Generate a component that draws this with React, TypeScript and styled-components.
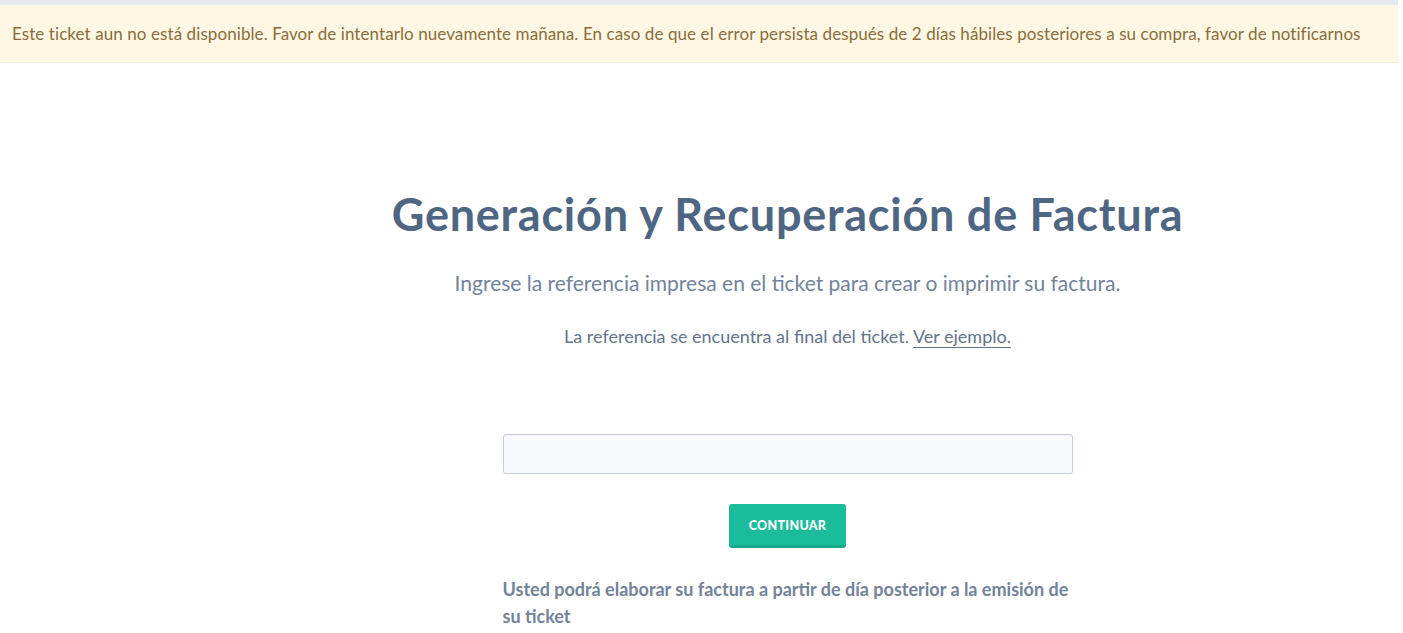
import React from 'react';
import styled, { createGlobalStyle } from 'styled-components';

const GlobalStyle = createGlobalStyle`
  html, body {
    margin: 0;
    padding: 0;
    background: #fff;
    font-family: Lato, "Open Sans", sans-serif;
  }
`;

const Page = styled.div`
  width: 1398px;
  border-top: 5px solid #e4e9f0;
`;

const Alert = styled.div`
  background: #fdf7e3;
  border-bottom: 1px solid #f6ecd0;
  color: #8a6d3b;
  font-size: 17px;
  letter-spacing: 0.08px;
  padding: 0 12px;
  height: 57px;
  display: flex;
  align-items: center;
  white-space: nowrap;
`;

const Main = styled.main`
  display: flex;
  flex-direction: column;
  align-items: center;
  padding-left: 177px;
  padding-top: 123px;
`;

const Title = styled.h1`
  margin: 0;
  font-size: 45px;
  font-weight: 700;
  color: #4f6683;
  letter-spacing: 0.75px;
  line-height: 56px;
`;

const Lead = styled.p`
  margin: 28px 0 0;
  font-size: 21px;
  color: #72839a;
  line-height: 26px;
`;

const Hint = styled.p`
  margin: 29px 0 0;
  font-size: 18px;
  color: #63748c;
  line-height: 22px;

  a {
    color: inherit;
    text-decoration: none;
    border-bottom: 1px solid #63748c;
  }
`;

const Form = styled.form`
  width: 570px;
  margin-top: 87px;
  display: flex;
  flex-direction: column;
  align-items: center;
`;

const Input = styled.input`
  box-sizing: border-box;
  width: 100%;
  height: 40px;
  background: #f8f9fc;
  border: 1px solid #c3cbd8;
  border-radius: 3px;
  outline: none;
`;

const Button = styled.button`
  margin-top: 30px;
  width: 117px;
  height: 44px;
  background: #1abc9c;
  border: none;
  border-bottom: 3px solid #17a98c;
  border-radius: 3px;
  color: #fff;
  font-family: Lato, sans-serif;
  font-weight: 900;
  font-size: 12.5px;
  letter-spacing: 0.3px;
  padding-top: 3px;
`;

const Note = styled.p`
  align-self: stretch;
  margin: 28px 0 0;
  font-size: 18px;
  font-weight: 700;
  color: #72839a;
  line-height: 27px;
`;

export default function App() {
  return (
    <Page>
      <GlobalStyle />
      <Alert>
        Este ticket aun no está disponible. Favor de intentarlo nuevamente mañana. En caso de que el error persista después de 2 días hábiles posteriores a su compra, favor de notificarnos
      </Alert>
      <Main>
        <Title>Generación y Recuperación de Factura</Title>
        <Lead>Ingrese la referencia impresa en el ticket para crear o imprimir su factura.</Lead>
        <Hint>
          La referencia se encuentra al final del ticket. <a href="#">Ver ejemplo.</a>
        </Hint>
        <Form onSubmit={e => e.preventDefault()}>
          <Input type="text" />
          <Button type="submit">CONTINUAR</Button>
          <Note>Usted podrá elaborar su factura a partir de día posterior a la emisión de su ticket</Note>
        </Form>
      </Main>
    </Page>
  );
}
